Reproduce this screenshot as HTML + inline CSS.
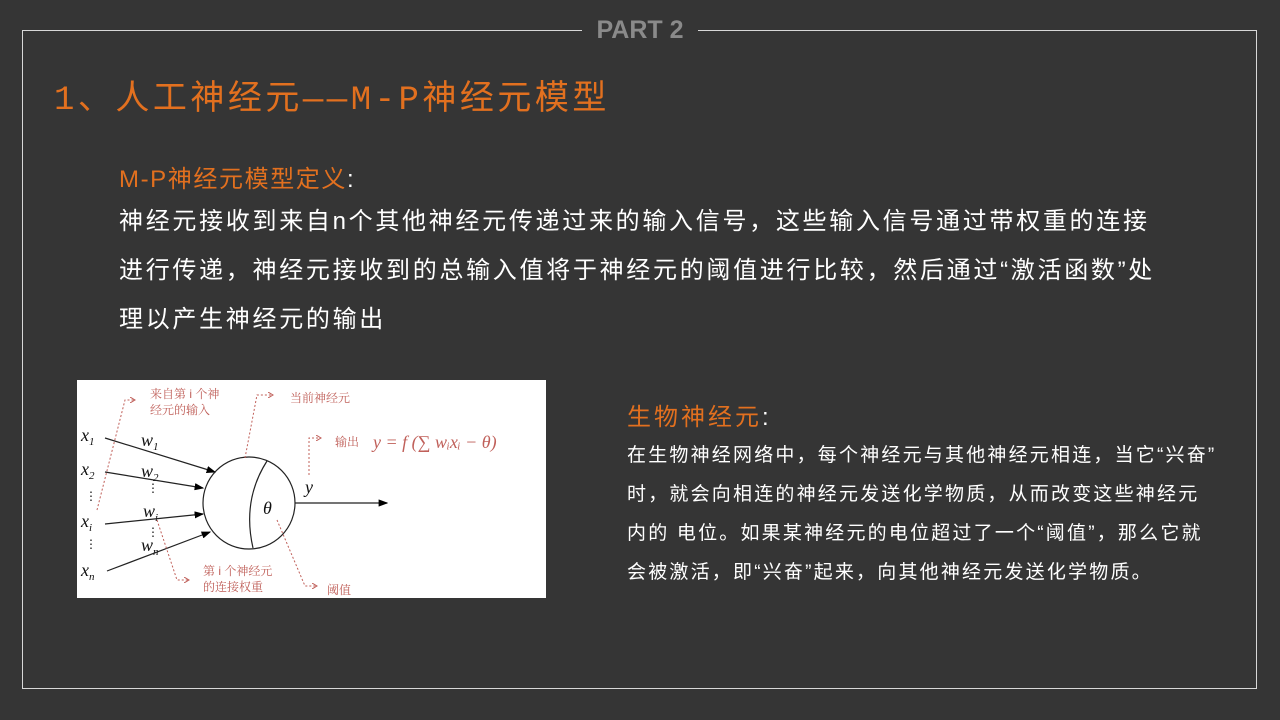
<!DOCTYPE html>
<html><head><meta charset="utf-8"><style>
body{margin:0;width:1280px;height:720px;background:#353535;position:relative;overflow:hidden;font-family:"Liberation Sans","Noto Sans CJK SC",sans-serif}
.frame{position:absolute;left:22px;top:30px;width:1235px;height:659px;border:1px solid #d8d8d8;box-sizing:border-box}
.part{position:absolute;left:582px;top:14px;width:116px;height:32px;background:#353535;color:#8a8a8a;font-size:25px;font-weight:bold;text-align:center;line-height:32px}
.t{position:absolute;color:#e2701f;white-space:nowrap}
.w{position:absolute;color:#fff;white-space:nowrap}
</style></head><body>
<div class="frame"></div>
<div class="part">PART 2</div>
<div class="t" style="left:54px;top:70px;font-size:34px;letter-spacing:3.5px;font-family:'Liberation Mono','Noto Sans CJK SC',monospace">1、人工神经元——M-P神经元模型</div>
<div class="t" style="left:119px;top:159px;font-size:24px;letter-spacing:1.6px">M-P神经元模型定义<span style="color:#fff">:</span></div>
<div class="w" style="left:119px;top:197px;font-size:24px;letter-spacing:2.7px;line-height:49px">神经元接收到来自n个其他神经元传递过来的输入信号，这些输入信号通过带权重的连接<br>进行传递，神经元接收到的总输入值将于神经元的阈值进行比较，然后通过“激活函数”处<br>理以产生神经元的输出</div>
<div class="t" style="left:627px;top:397px;font-size:24px;letter-spacing:3px">生物神经元<span style="color:#fff">:</span></div>
<div class="w" style="left:627px;top:436px;font-size:19px;letter-spacing:2.2px;line-height:39px">在生物神经网络中，每个神经元与其他神经元相连，当它“兴奋”<br>时，就会向相连的神经元发送化学物质，从而改变这些神经元<br>内的 电位。如果某神经元的电位超过了一个“阈值”，那么它就<br>会被激活，即“兴奋”起来，向其他神经元发送化学物质。</div>
<svg style="position:absolute;left:77px;top:380px" width="469" height="218" viewBox="0 0 469 218">
<defs><marker id="a" markerWidth="8" markerHeight="6" refX="7" refY="3" orient="auto"><path d="M0,0L8,3L0,6z" fill="#000"/></marker>
<marker id="r" markerWidth="6" markerHeight="6" refX="5" refY="3" orient="auto"><path d="M0,0L5,3L0,6" fill="none" stroke="#c0605a"/></marker></defs>
<rect width="469" height="218" fill="#fff"/>
<g font-family="Liberation Serif,serif" font-style="italic" font-size="18" fill="#111">
<text x="4" y="61">x<tspan font-size="11" dy="4">1</tspan></text>
<text x="4" y="95">x<tspan font-size="11" dy="4">2</tspan></text>
<text x="4" y="147">x<tspan font-size="11" dy="4">i</tspan></text>
<text x="4" y="196">x<tspan font-size="11" dy="4">n</tspan></text>
<text x="64" y="66">w<tspan font-size="11" dy="4">1</tspan></text>
<text x="64" y="97">w<tspan font-size="11" dy="4">2</tspan></text>
<text x="66" y="137">w<tspan font-size="11" dy="4">i</tspan></text>
<text x="64" y="171">w<tspan font-size="11" dy="4">n</tspan></text>
<text x="186" y="134">θ</text><text x="228" y="113">y</text>
<text x="8" y="120" font-style="normal" font-size="12">⋮</text><text x="8" y="168" font-style="normal" font-size="12">⋮</text>
<text x="70" y="112" font-style="normal" font-size="12">⋮</text><text x="70" y="156" font-style="normal" font-size="12">⋮</text>
</g>
<g stroke="#222" stroke-width="1.2" fill="none" marker-end="url(#a)">
<line x1="28" y1="58" x2="138" y2="92"/><line x1="28" y1="92" x2="126" y2="108"/>
<line x1="28" y1="144" x2="126" y2="134"/><line x1="30" y1="191" x2="133" y2="152"/>
<line x1="218" y1="123" x2="310" y2="123"/></g>
<circle cx="172" cy="123" r="46" fill="none" stroke="#222" stroke-width="1.2"/>
<path d="M190,81 Q165,120 176,168" fill="none" stroke="#222" stroke-width="1.2"/>
<g stroke="#c0605a" stroke-dasharray="2,2" fill="none" marker-end="url(#r)">
<path d="M20,130 L48,20 L58,20"/><path d="M168,78 L180,15 L196,15"/><path d="M232,95 L232,58 L244,58"/>
<path d="M80,140 L100,200 L112,200"/><path d="M200,140 L228,206 L240,206"/></g>
<g fill="#c0605a" font-size="12" font-family="Liberation Sans,Noto Serif CJK SC,sans-serif">
<text x="73" y="18">来自第 i 个神</text><text x="73" y="34">经元的输入</text>
<text x="213" y="22">当前神经元</text><text x="258" y="66">输出</text>
<text x="126" y="195">第 i 个神经元</text><text x="126" y="211">的连接权重</text><text x="250" y="214">阈值</text>
<text x="296" y="68" font-family="Liberation Serif,serif" font-style="italic" font-size="18">y = f (∑ wᵢxᵢ − θ)</text></g>
</svg>
</body></html>
